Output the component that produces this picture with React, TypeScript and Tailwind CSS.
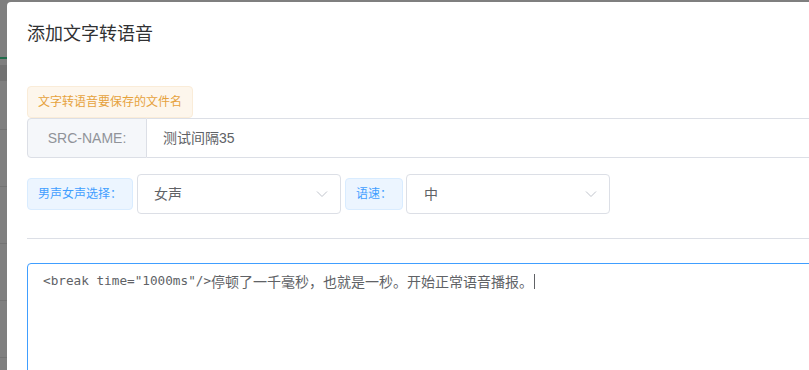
import React from "react";

const CJK = '"Helvetica Neue", "Liberation Sans", "Noto Sans CJK SC", sans-serif';

function Chevron() {
  return (
    <svg width="12" height="8" viewBox="0 0 12 8" fill="none">
      <path d="M1 1.5 L6 6.5 L11 1.5" stroke="#c0c4cc" strokeWidth="1" />
    </svg>
  );
}

export default function App() {
  return (
    <div className="relative h-[370px] w-[809px] overflow-hidden bg-[#7f7f7f]" style={{ fontFamily: CJK }}>
      {/* masked page behind */}
      <div className="absolute left-0 top-[57px] h-[2px] w-[7px] bg-[#1f6b4a]" />
      <div className="absolute left-0 top-[65px] h-[16px] w-[7px] bg-[#727272]" />
      <div className="absolute left-0 top-[129px] h-px w-[7px] bg-[#737373]" />
      <div className="absolute left-0 top-[186px] h-px w-[7px] bg-[#737373]" />
      <div className="absolute left-0 top-[243px] h-px w-[7px] bg-[#737373]" />
      <div className="absolute left-0 top-[300px] h-px w-[7px] bg-[#737373]" />
      <div className="absolute left-0 top-[357px] h-px w-[7px] bg-[#737373]" />

      <div className="absolute left-[7px] top-[2px] h-[400px] w-[900px] rounded-tl-[4px] bg-white">
        <div className="px-[20px] pt-[20px]">
          <div className="text-[18px] leading-[24px] text-[#303133]">添加文字转语音</div>
        </div>
        <div className="px-[20px] pt-[40px]">
          <div className="inline-flex h-[32px] items-center rounded-[4px] border border-[#faecd8] bg-[#fdf6ec] px-[10px] text-[12px] text-[#e6a23c]">
            文字转语音要保存的文件名
          </div>
          <div className="flex h-[40px]">
            <div className="flex w-[120px] items-center justify-center rounded-l-[4px] border border-[#dcdfe6] bg-[#f5f7fa] text-[14px] text-[#909399]">
              SRC-NAME:
            </div>
            <div className="flex flex-1 items-center border-y border-[#dcdfe6] pl-[16px] text-[14px] text-[#606266]">
              测试间隔35
            </div>
          </div>

          <div className="mt-[16px] flex items-center">
            <div className="flex h-[32px] shrink-0 items-center whitespace-nowrap rounded-[4px] border border-[#d9ecff] bg-[#ecf5ff] px-[10px] text-[12px] text-[#409eff]">
              男声女声选择：
            </div>
            <div className="ml-[4px] flex h-[40px] w-[204px] shrink-0 items-center justify-between rounded-[4px] border border-[#dcdfe6] pl-[16px] pr-[12px] text-[14px] text-[#606266]">
              <span>女声</span>
              <Chevron />
            </div>
            <div className="ml-[4px] flex h-[32px] shrink-0 items-center whitespace-nowrap rounded-[4px] border border-[#d9ecff] bg-[#ecf5ff] px-[10px] text-[12px] text-[#409eff]">
              语速：
            </div>
            <div className="ml-[3px] flex h-[40px] w-[204px] shrink-0 items-center justify-between rounded-[4px] border border-[#dcdfe6] pl-[17px] pr-[12px] text-[14px] text-[#606266]">
              <span>中</span>
              <Chevron />
            </div>
          </div>

          <div className="mt-[24px] h-px bg-[#dcdfe6]" />

          <div className="mt-[24px] h-[150px] rounded-[4px] border border-[#409eff] px-[15px] pt-[7px]">
            <div className="flex items-center text-[#606266]">
              <span className="text-[12.7px] leading-[20px]" style={{ fontFamily: '"DejaVu Sans Mono", monospace' }}>
                {'<break time="1000ms"/>'}
              </span>
              <span className="text-[14px] leading-[20px]" style={{ fontFamily: '"Noto Sans CJK SC", sans-serif' }}>
                停顿了一千毫秒，也就是一秒。开始正常语音播报。
              </span>
              <span className="ml-[1px] inline-block h-[15px] w-px bg-[#606266]" />
            </div>
          </div>
        </div>
      </div>
    </div>
  );
}
